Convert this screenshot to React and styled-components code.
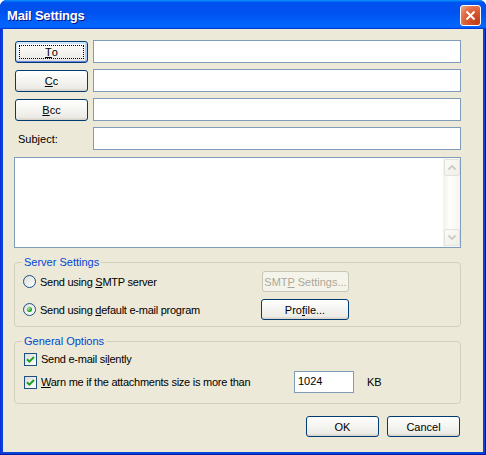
import styled, { createGlobalStyle } from "styled-components";

const GlobalStyle = createGlobalStyle`
  html, body {
    margin: 0;
    padding: 0;
    background: #ffffff;
  }
  body {
    font-family: "Liberation Sans", Arial, sans-serif;
  }
`;

const Window = styled.div`
  width: 486px;
  height: 455px;
  box-sizing: border-box;
  display: flex;
  flex-direction: column;
  background: #0842d6;
  border-radius: 7px 7px 0 0;
  overflow: hidden;
  box-shadow: inset -1px -1px #001ea0, inset 1px 0 #0831d9;
`;

const TitleBar = styled.div`
  height: 29px;
  flex: none;
  display: flex;
  align-items: center;
  justify-content: space-between;
  padding: 0 5px 0 7px;
  background: linear-gradient(180deg, #0997ff, #0053ee 8%, #0050ee 40%, #06f 88%, #06f 93%, #005bff 95%, #003dd7 96%, #003dd7);
`;

const Title = styled.div`
  color: #ffffff;
  font-weight: bold;
  font-size: 13px;
  letter-spacing: -0.2px;
  text-shadow: 1px 1px 0 #0f1089;
  margin-top: 2px;
`;

const CloseButton = styled.div`
  width: 21px;
  height: 21px;
  box-sizing: border-box;
  border: 1px solid #ffffff;
  border-radius: 3px;
  background: radial-gradient(circle at 85% 85%, #c13e18, #d9582e 45%, #e4734e 70%, #f0a283 95%);
  display: flex;
  align-items: center;
  justify-content: center;
  margin-top: 2px;
`;

const Body = styled.div`
  flex: 1;
  margin: 0 3px 3px;
  background: #ece9d8;
  padding: 11px 22px 0 11px;
  font-size: 11px;
  color: #000000;
  display: flex;
  flex-direction: column;
`;

const Fields = styled.div`
  display: flex;
  flex-direction: column;
  gap: 6px;
`;

const FieldRow = styled.div`
  display: flex;
  align-items: center;
  height: 23px;
`;

const LabelCell = styled.div`
  width: 79px;
  flex: none;
  padding-left: ${(p) => (p.$text ? "4px" : "1px")};
  box-sizing: border-box;
`;

const TextInput = styled.div`
  height: ${(p) => p.$h || 23}px;
  width: ${(p) => (p.$w ? `${p.$w}px` : "auto")};
  flex: ${(p) => (p.$w ? "none" : "1")};
  box-sizing: border-box;
  border: 1px solid #7f9db9;
  background: #ffffff;
  padding: 3px 4px 0 3px;
  font-size: 11px;
`;

const XPButton = styled.div`
  width: ${(p) => p.$w || 73}px;
  height: ${(p) => p.$h || 22}px;
  box-sizing: border-box;
  border: 1px solid ${(p) => (p.$disabled ? "#c9c7ba" : "#003c74")};
  border-radius: 3px;
  background: ${(p) =>
    p.$disabled ? "#f5f4ea" : "linear-gradient(180deg, #ffffff, #ecebe6 86%, #d6d0c5)"};
  color: ${(p) => (p.$disabled ? "#aca899" : "#000000")};
  display: flex;
  align-items: center;
  justify-content: center;
  font-size: 11px;
  position: relative;
  box-shadow: ${(p) =>
    p.$focused ? "inset 0 -1px #6982ee, inset 1px 2px #cee7ff, inset -2px 0 #adcfff" : "none"};
  & u {
    text-decoration: underline;
  }
  &::after {
    content: "";
    display: ${(p) => (p.$focused ? "block" : "none")};
    position: absolute;
    inset: 3px;
    border: 1px dotted #000000;
  }
`;

const Memo = styled.div`
  margin-top: 7px;
  height: 91px;
  box-sizing: border-box;
  border: 1px solid #7f9db9;
  background: #ffffff;
  display: flex;
  justify-content: flex-end;
`;

const ScrollTrack = styled.div`
  width: 17px;
  box-sizing: border-box;
  padding: 1px 0 1px 1px;
  display: flex;
  flex-direction: column;
  justify-content: space-between;
  background: linear-gradient(90deg, #f3f1ec, #fefefb 40%, #f6f5f0);
`;

const ScrollArrow = styled.div`
  width: 16px;
  height: 17px;
  box-sizing: border-box;
  border: 1px solid #e3e2dc;
  border-radius: 2px;
  background: linear-gradient(135deg, #fbfbf8, #efeee8);
  display: flex;
  align-items: center;
  justify-content: center;
`;

const Group = styled.fieldset`
  margin: ${(p) => p.$top}px 0 0 0;
  padding: ${(p) => p.$pad};
  border: 1px solid #d0d0bf;
  border-radius: 4px;
  min-width: 0;
`;

const Legend = styled.legend`
  color: #0046d5;
  font-size: 11px;
  line-height: 13px;
  padding: 0 2px;
  margin-left: ${(p) => p.$shift}px;
`;

const OptionRow = styled.div`
  display: grid;
  grid-template-columns: ${(p) => p.$cols};
  align-items: center;
  height: ${(p) => p.$h}px;
  margin-top: ${(p) => p.$gap || 0}px;
`;

const Choice = styled.label`
  display: flex;
  align-items: center;
  gap: 4px;
  font-size: 11px;
  letter-spacing: -0.25px;
  white-space: nowrap;
`;

const RadioDot = styled.span`
  width: 13px;
  height: 13px;
  flex: none;
  box-sizing: border-box;
  border-radius: 50%;
  border: 1px solid #1c5180;
  background: linear-gradient(135deg, #dcdcd7, #ffffff);
  display: flex;
  align-items: center;
  justify-content: center;
  &::after {
    content: "";
    display: ${(p) => (p.$checked ? "block" : "none")};
    width: 5px;
    height: 5px;
    border-radius: 50%;
    background: radial-gradient(circle at 35% 35%, #a8eca8, #21a121 60%, #1a7e1a);
  }
`;

const CheckBox = styled.span`
  width: 13px;
  height: 13px;
  flex: none;
  box-sizing: border-box;
  border: 1px solid #1c5180;
  background: linear-gradient(135deg, #dcdcd7, #ffffff);
  display: flex;
  align-items: center;
  justify-content: center;
`;

const Unit = styled.span`
  margin-left: 13px;
  font-size: 11px;
`;

const Footer = styled.div`
  display: flex;
  justify-content: flex-end;
  gap: 8px;
  margin: 12px 1px 0 0;
`;

const Check = () => (
  <CheckBox>
    <svg width="9" height="9" viewBox="0 0 9 9">
      <path d="M1 4.2 L3.4 6.6 L8 2" fill="none" stroke="#21a121" strokeWidth="2" />
    </svg>
  </CheckBox>
);

const Chevron = ({ up }) => (
  <svg width="8" height="5" viewBox="0 0 8 5">
    <path
      d={up ? "M0.5 4.5 L4 1 L7.5 4.5" : "M0.5 0.5 L4 4 L7.5 0.5"}
      fill="none"
      stroke="#c8c7bf"
      strokeWidth="1.6"
    />
  </svg>
);

export default function App() {
  return (
    <>
      <GlobalStyle />
      <Window>
        <TitleBar>
          <Title>Mail Settings</Title>
          <CloseButton>
            <svg width="11" height="11" viewBox="0 0 11 11">
              <path d="M1.5 1.5 L9.5 9.5 M9.5 1.5 L1.5 9.5" stroke="#ffffff" strokeWidth="2" />
            </svg>
          </CloseButton>
        </TitleBar>
        <Body>
          <Fields>
            <FieldRow>
              <LabelCell>
                <XPButton $focused>
                  <u>T</u>o
                </XPButton>
              </LabelCell>
              <TextInput />
            </FieldRow>
            <FieldRow>
              <LabelCell>
                <XPButton>
                  <u>C</u>c
                </XPButton>
              </LabelCell>
              <TextInput />
            </FieldRow>
            <FieldRow>
              <LabelCell>
                <XPButton>
                  <u>B</u>cc
                </XPButton>
              </LabelCell>
              <TextInput />
            </FieldRow>
            <FieldRow>
              <LabelCell $text>Subject:</LabelCell>
              <TextInput />
            </FieldRow>
          </Fields>

          <Memo>
            <ScrollTrack>
              <ScrollArrow>
                <Chevron up />
              </ScrollArrow>
              <ScrollArrow>
                <Chevron />
              </ScrollArrow>
            </ScrollTrack>
          </Memo>

          <Group $top={8} $pad="2px 8px 6px 8px">
            <Legend $shift={-1}>Server Settings</Legend>
            <OptionRow $cols="239px 87px" $h={21}>
              <Choice>
                <RadioDot />
                <span>
                  Send using <u>S</u>MTP server
                </span>
              </Choice>
              <XPButton $w={87} $h={21} $disabled>
                <span>
                  SMT<u>P</u> Settings...
                </span>
              </XPButton>
            </OptionRow>
            <OptionRow $cols="238px 88px" $h={21} $gap={7}>
              <Choice>
                <RadioDot $checked />
                <span>
                  Send using <u>d</u>efault e-mail program
                </span>
              </Choice>
              <XPButton $w={88} $h={21}>
                <span>
                  Pro<u>f</u>ile...
                </span>
              </XPButton>
            </OptionRow>
          </Group>

          <Group $top={8} $pad="3px 9px 10px 9px">
            <Legend $shift={-2}>General Options</Legend>
            <OptionRow $cols="auto" $h={16}>
              <Choice>
                <Check />
                <span>
                  Send e-mail si<u>l</u>ently
                </span>
              </Choice>
            </OptionRow>
            <OptionRow $cols="270px 60px auto" $h={22} $gap={4}>
              <Choice>
                <Check />
                <span>
                  <u>W</u>arn me if the attachments size is more than
                </span>
              </Choice>
              <TextInput $w={60} $h={22}>
                1024
              </TextInput>
              <Unit>KB</Unit>
            </OptionRow>
          </Group>

          <Footer>
            <XPButton $h={21}>OK</XPButton>
            <XPButton $h={21}>Cancel</XPButton>
          </Footer>
        </Body>
      </Window>
    </>
  );
}
